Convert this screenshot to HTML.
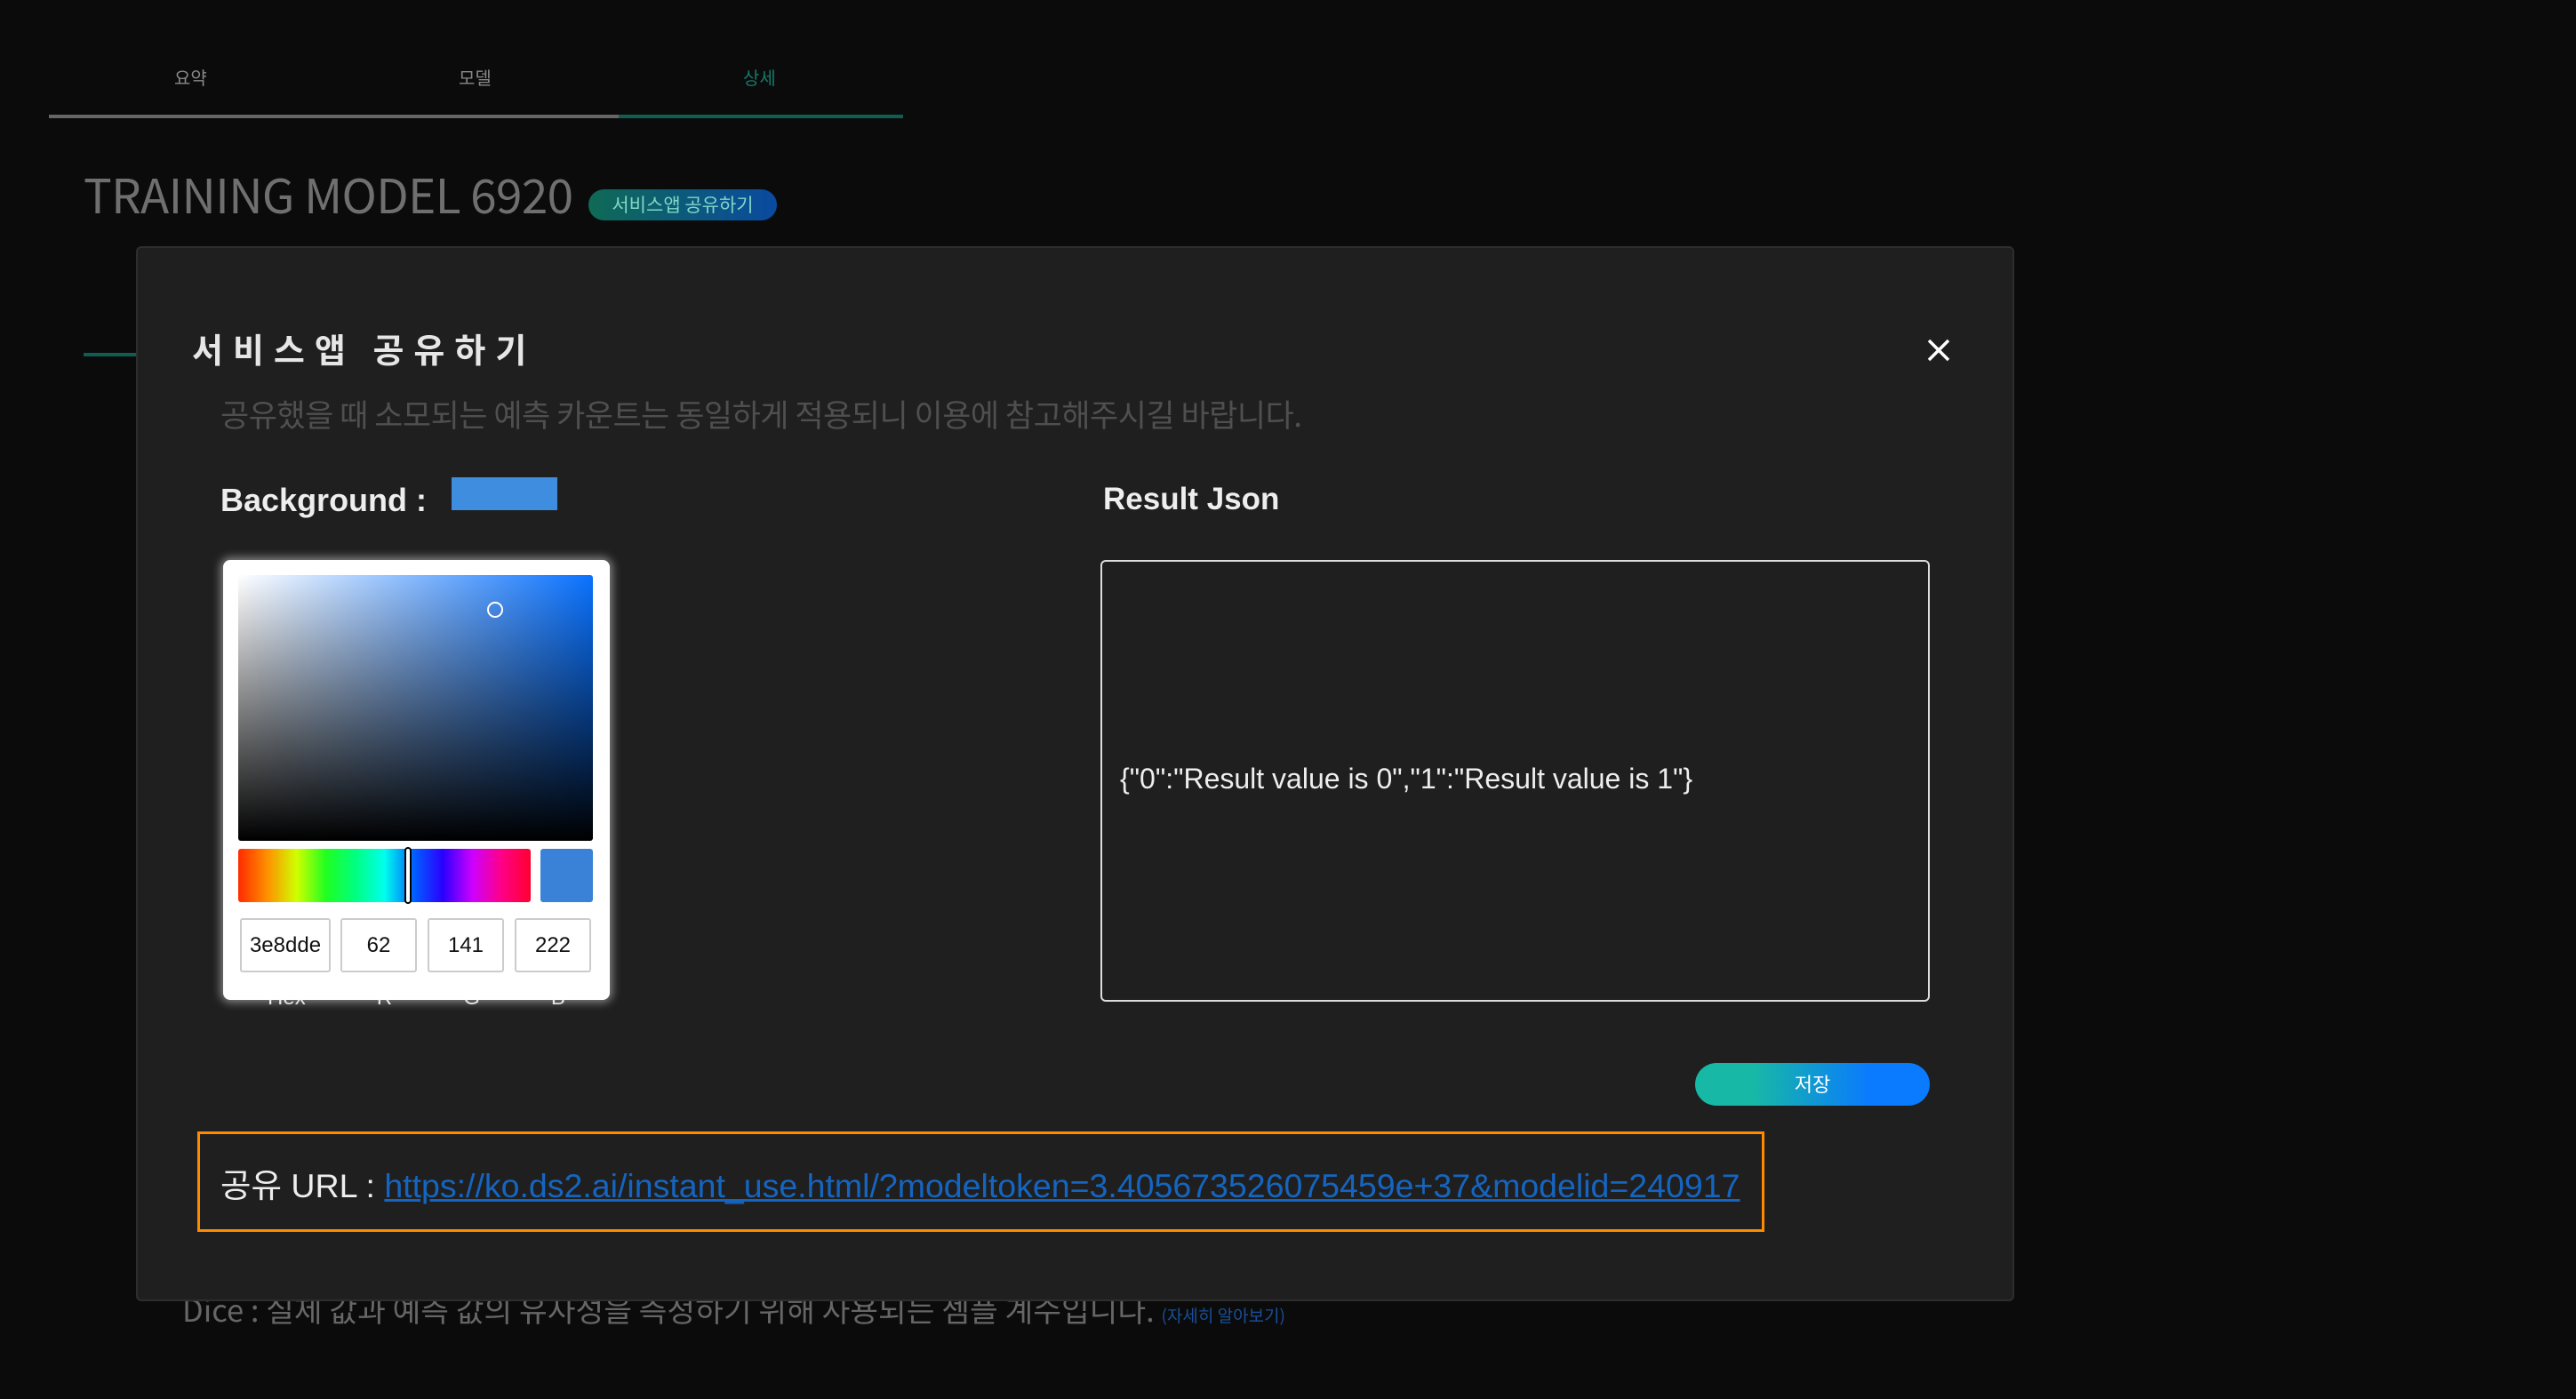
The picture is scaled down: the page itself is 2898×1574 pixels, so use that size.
<!DOCTYPE html>
<html><head><meta charset="utf-8"><style>
*{margin:0;padding:0;box-sizing:border-box}
body{width:2898px;height:1574px;background:#0b0b0b;position:relative;overflow:hidden;font-family:"Liberation Sans","Noto Sans CJK KR",sans-serif}
.a{position:absolute;white-space:nowrap}
.k{font-family:"Noto Sans CJK KR","Liberation Sans",sans-serif}
</style></head><body>
<div class="a k" style="left:196px;top:72px;font-size:20px;color:#888">요약</div>
<div class="a k" style="left:516px;top:72px;font-size:20px;color:#888">모델</div>
<div class="a k" style="left:836px;top:72px;font-size:20px;color:#157a68">상세</div>
<div class="a" style="left:55px;top:129px;width:641px;height:4px;background:#666"></div>
<div class="a" style="left:696px;top:129px;width:320px;height:4px;background:#0f5e52"></div>
<div class="a k" style="left:94px;top:180px;font-size:53px;color:#6f6f6f;letter-spacing:-0.6px">TRAINING MODEL 6920</div>
<div class="a k" style="left:662px;top:213px;width:212px;height:35px;border-radius:18px;background:linear-gradient(90deg,#0f6a55,#0a4aa0);color:#7fd8c4;font-size:21px;line-height:35px;text-align:center">서비스앱 공유하기</div>
<div class="a" style="left:94px;top:397px;width:60px;height:4px;background:#0f5e52"></div>
<div class="a k" style="left:205px;top:1447px;font-size:34.5px;color:#666">Dice : 실제 값과 예측 값의 유사성을 측정하기 위해 사용되는 셈플 계수입니다. <span style="font-size:19px;color:#1a4f9a">(자세히 알아보기)</span></div>

<div class="a" style="left:153px;top:277px;width:2113px;height:1187px;background:#1f1f1f;border:2px solid #2e2e2e;border-radius:6px">
 <div class="a k" style="left:61px;top:85px;font-size:38px;font-weight:bold;color:#e6e6e6;letter-spacing:11px">서비스앱 공유하기</div>
 <svg class="a" style="left:2012px;top:101px" width="28" height="28" viewBox="0 0 28 28"><path d="M3 3L25 25M25 3L3 25" stroke="#fff" stroke-width="3.5"/></svg>
 <div class="a k" style="left:93px;top:161px;font-size:35px;color:#4f4f4f;letter-spacing:-0.5px">공유했을 때 소모되는 예측 카운트는 동일하게 적용되니 이용에 참고해주시길 바랍니다.</div>
 <div class="a" style="left:93px;top:263px;font-size:36px;font-weight:bold;color:#eee">Background :</div>
 <div class="a" style="left:353px;top:258px;width:119px;height:37px;background:#3e8dde"></div>
 <div class="a" style="left:1086px;top:263px;font-size:35px;font-weight:bold;color:#eee">Result Json</div>

 <div class="a" style="left:96px;top:830px;width:435px;display:flex;justify-content:space-around;font-size:24px;color:#ddd;padding:0 10px 0 0"><span style="margin-left:10px">Hex</span><span>R</span><span>G</span><span>B</span></div>
 <div class="a" style="left:96px;top:351px;width:435px;height:495px;background:#fff;border-radius:8px;box-shadow:0 0 10px 3px rgba(255,255,255,.45)">
  <div class="a" style="left:17px;top:17px;width:399px;height:299px;border-radius:3px;background:linear-gradient(to top,#000,rgba(0,0,0,0)),linear-gradient(to right,#fff,#0a72ff)"></div>
  <div class="a" style="left:297px;top:47px;width:18px;height:18px;border:2px solid #fff;border-radius:50%"></div>
  <div class="a" style="left:17px;top:325px;width:329px;height:60px;border-radius:3px;background:linear-gradient(90deg,#ff2a00,#ff9000 10%,#d0ff00 20%,#20ff20 30%,#00ff80 40%,#00ffee 50%,#0060ff 60%,#2a00ff 70%,#cc00ff 80%,#ff0088 90%,#ff0030)"></div>
  <div class="a" style="left:204px;top:323px;width:8px;height:64px;border:2px solid #000;background:#fff;border-radius:4px"></div>
  <div class="a" style="left:357px;top:325px;width:59px;height:60px;border-radius:3px;background:#3a82d8"></div>
  <div class="a" style="left:19px;top:403px;width:102px;height:61px;border:2px solid #ccc;border-radius:3px;font-size:24px;line-height:57px;text-align:center;color:#111">3e8dde</div>
  <div class="a" style="left:132px;top:403px;width:86px;height:61px;border:2px solid #ccc;border-radius:3px;font-size:24px;line-height:57px;text-align:center;color:#111">62</div>
  <div class="a" style="left:230px;top:403px;width:86px;height:61px;border:2px solid #ccc;border-radius:3px;font-size:24px;line-height:57px;text-align:center;color:#111">141</div>
  <div class="a" style="left:328px;top:403px;width:86px;height:61px;border:2px solid #ccc;border-radius:3px;font-size:24px;line-height:57px;text-align:center;color:#111">222</div>
 </div>

 <div class="a" style="left:1083px;top:351px;width:933px;height:497px;border:2px solid #ddd;border-radius:6px"></div>
 <div class="a" style="left:1105px;top:579px;font-size:32px;color:#eee">{"0":"Result value is 0","1":"Result value is 1"}</div>

 <div class="a k" style="left:1752px;top:917px;width:264px;height:48px;border-radius:24px;background:linear-gradient(90deg,#17b8a6 25%,#0a7aff 75%);color:#fff;font-size:22px;line-height:46px;text-align:center">저장</div>

 <div class="a" style="left:67px;top:994px;width:1763px;height:113px;border:3px solid #ff8a00"></div>
 <div class="a" style="left:93px;top:1024px;font-size:37.5px;color:#eee"><span class="k">공유</span> URL : <span style="color:#1565c0;text-decoration:underline">https://ko.ds2.ai/instant_use.html/?modeltoken=3.405673526075459e+37&amp;modelid=240917</span></div>
</div>
</body></html>
